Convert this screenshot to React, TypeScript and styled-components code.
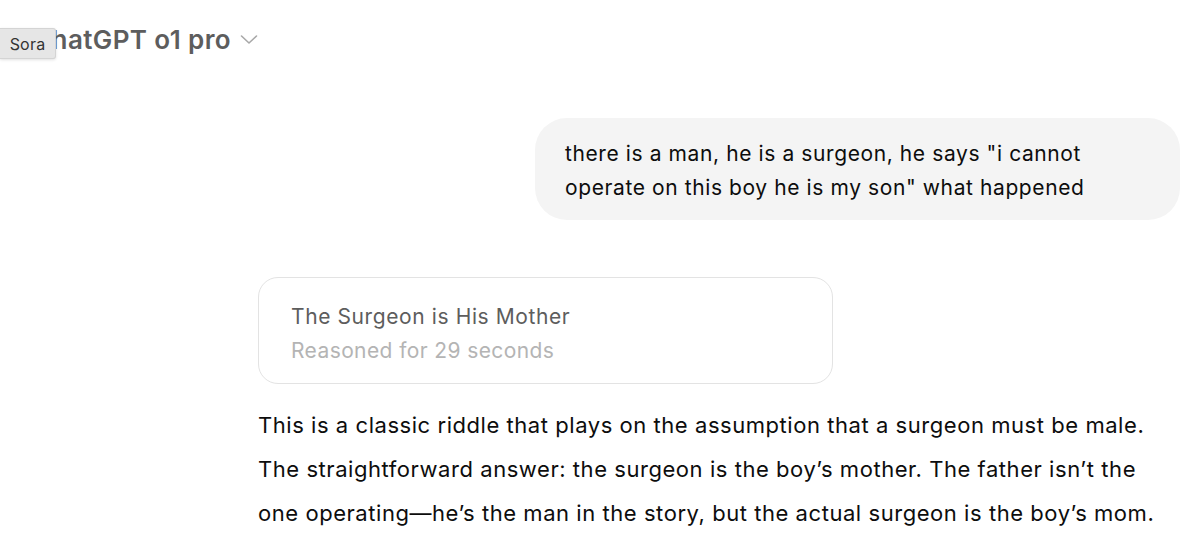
import React from 'react';
import styled, { createGlobalStyle } from 'styled-components';

const GlobalStyle = createGlobalStyle`
  html, body {
    margin: 0;
    padding: 0;
    background: #ffffff;
  }
  body {
    font-family: Inter, "Noto Sans", "Liberation Sans", sans-serif;
    -webkit-font-smoothing: antialiased;
  }
`;

const Page = styled.div`
  width: 1200px;
  height: 535px;
  overflow: hidden;
  position: relative;
  background: #fff;
`;

const Header = styled.header`
  position: relative;
  height: 80px;
  display: flex;
  align-items: flex-start;
  padding: 24px 0 0 32px;
  box-sizing: border-box;
`;

const ModelPicker = styled.button`
  display: flex;
  align-items: center;
  gap: 9px;
  border: none;
  background: transparent;
  padding: 0;
  cursor: pointer;
  font-family: inherit;
  font-size: 26px;
  font-weight: 600;
  letter-spacing: 0.4px;
  color: #5d5d5d;
`;

const Tooltip = styled.div`
  position: absolute;
  left: 0;
  top: 28px;
  height: 31px;
  width: 56px;
  box-sizing: border-box;
  display: flex;
  align-items: center;
  justify-content: center;
  background: #e6e6e6;
  border: 1px solid #d4d4d4;
  border-left: none;
  border-radius: 0 3px 3px 0;
  box-shadow: 0 1px 3px rgba(0, 0, 0, 0.12);
  font-size: 16px;
  letter-spacing: 0.2px;
  color: #333;
`;

const Thread = styled.main`
  display: flex;
  flex-direction: column;
  padding: 38px 20px 0 258px;
`;

const UserBubble = styled.div`
  align-self: flex-end;
  width: 645px;
  box-sizing: border-box;
  padding: 19px 30px 15px;
  background: #f4f4f4;
  border-radius: 32px;
  font-size: 21px;
  line-height: 34px;
  letter-spacing: 0.6px;
  color: #0d0d0d;
`;

const ReasoningCard = styled.div`
  margin-top: 57px;
  width: 575px;
  height: 107px;
  box-sizing: border-box;
  border: 1px solid #e3e3e3;
  border-radius: 20px;
  padding: 25px 32px 0;
  display: flex;
  flex-direction: column;
  gap: 6px;
`;

const CardTitle = styled.div`
  font-size: 21px;
  line-height: 28px;
  letter-spacing: 0.6px;
  color: #5d5d5d;
`;

const CardMeta = styled.div`
  font-size: 21px;
  line-height: 28px;
  letter-spacing: 0.4px;
  color: #b4b4b4;
`;

const Answer = styled.p`
  margin: 19px 0 0;
  max-width: 905px;
  font-size: 22px;
  line-height: 44px;
  letter-spacing: 0.55px;
  color: #0d0d0d;
`;

function Chevron() {
  return (
    <svg width="18" height="11" viewBox="0 0 18 11" fill="none">
      <path d="M1.5 2 L9 9 L16.5 2" stroke="#a8a8a8" strokeWidth="1.6" strokeLinecap="round" strokeLinejoin="round" />
    </svg>
  );
}

export default function App() {
  return (
    <Page>
      <GlobalStyle />
      <Header>
        <ModelPicker>
          ChatGPT o1 pro
          <Chevron />
        </ModelPicker>
        <Tooltip>Sora</Tooltip>
      </Header>
      <Thread>
        <UserBubble>
          there is a man, he is a surgeon, he says "i cannot operate on this boy he is my son" what happened
        </UserBubble>
        <ReasoningCard>
          <CardTitle>The Surgeon is His Mother</CardTitle>
          <CardMeta>Reasoned for 29 seconds</CardMeta>
        </ReasoningCard>
        <Answer>
          This is a classic riddle that plays on the assumption that a surgeon must be male. The straightforward
          answer: the surgeon is the boy’s mother. The father isn’t the one operating—he’s the man in the story, but
          the actual surgeon is the boy’s mom.
        </Answer>
      </Thread>
    </Page>
  );
}
